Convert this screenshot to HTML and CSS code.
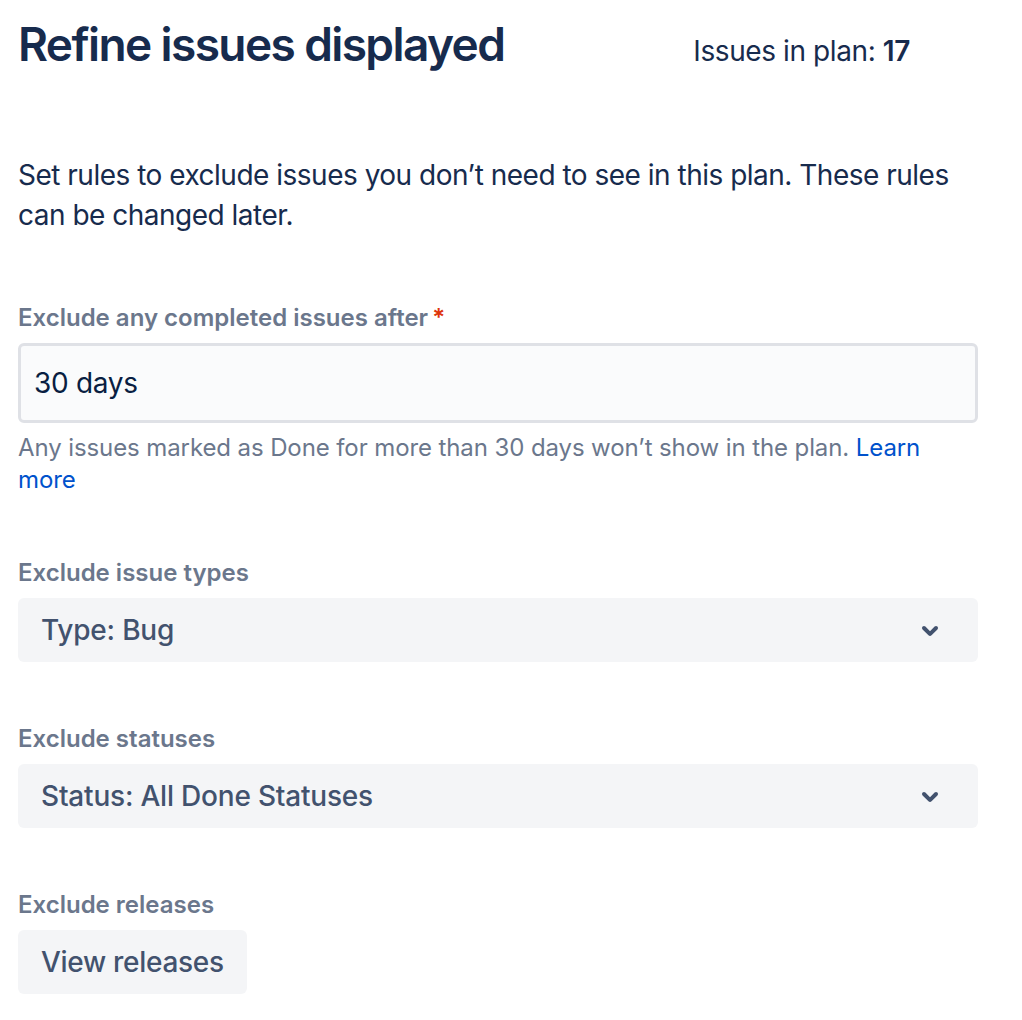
FILE: index.html
```html
<!DOCTYPE html>
<html lang="en">
<head>
<meta charset="utf-8">
<title>Refine issues displayed</title>
<link rel="stylesheet" href="styles.css">
</head>
<body>
<main class="page">
  <header class="header">
    <h1 class="title">Refine issues displayed</h1>
    <div class="count">Issues in plan: <strong>17</strong></div>
  </header>
  <p class="intro">Set rules to exclude issues you don’t need to see in this plan. These rules can be changed later.</p>

  <section class="field field-first">
    <div class="label">Exclude any completed issues after<span class="req">*</span></div>
    <div class="textfield">30 days</div>
    <div class="helper">Any issues marked as Done for more than 30 days won’t show in the plan. <a class="link" href="#">Learn more</a></div>
  </section>

  <section class="field">
    <div class="label">Exclude issue types</div>
    <div class="select">
      <span class="select-value">Type: Bug</span>
      <svg class="chevron" viewBox="0 0 24 24" width="48" height="48"><path fill="#42526E" d="M8.292 10.293a1.009 1.009 0 0 0 0 1.419l2.939 2.965c.218.215.5.322.779.322s.556-.107.769-.322l2.93-2.955a1.01 1.01 0 0 0 0-1.419.987.987 0 0 0-1.406 0l-2.298 2.317-2.307-2.327a.99.99 0 0 0-1.406 0z"/></svg>
    </div>
  </section>

  <section class="field">
    <div class="label">Exclude statuses</div>
    <div class="select">
      <span class="select-value">Status: All Done Statuses</span>
      <svg class="chevron" viewBox="0 0 24 24" width="48" height="48"><path fill="#42526E" d="M8.292 10.293a1.009 1.009 0 0 0 0 1.419l2.939 2.965c.218.215.5.322.779.322s.556-.107.769-.322l2.93-2.955a1.01 1.01 0 0 0 0-1.419.987.987 0 0 0-1.406 0l-2.298 2.317-2.307-2.327a.99.99 0 0 0-1.406 0z"/></svg>
    </div>
  </section>

  <section class="field">
    <div class="label">Exclude releases</div>
    <button class="button" type="button">View releases</button>
  </section>
</main>
</body>
</html>
```

FILE: styles.css
```css
html, body {
  margin: 0;
  padding: 0;
  background: #ffffff;
}

body {
  font-family: Inter, "Noto Sans", "Liberation Sans", sans-serif;
  color: #172B4D;
}

.page {
  width: 960px;
  padding: 16px 0 0 18px;
}

.header {
  display: flex;
  align-items: baseline;
  justify-content: space-between;
  padding-right: 68px;
}

.title {
  margin: 0;
  font-size: 46px;
  line-height: 56px;
  font-weight: 600;
  letter-spacing: -1.6px;
  color: #172B4D;
}

.count {
  font-size: 28px;
  line-height: 40px;
  letter-spacing: -0.4px;
  color: #172B4D;
}

.count strong {
  font-weight: 600;
}

.intro {
  margin: 83px 0 0;
  font-size: 28px;
  line-height: 40px;
  letter-spacing: -0.5px;
  color: #172B4D;
}

.field {
  margin-top: 61px;
}

.field-first {
  margin-top: 67px;
}

.label {
  font-size: 24px;
  line-height: 32px;
  font-weight: 600;
  color: #6B778C;
  margin-bottom: 9px;
}

.req {
  color: #DE350B;
  margin-left: 4px;
}

.textfield {
  box-sizing: border-box;
  height: 80px;
  border: 3px solid #DFE1E6;
  border-radius: 6px;
  background: #FAFBFC;
  padding: 0 13px;
  display: flex;
  align-items: center;
  font-size: 28px;
  letter-spacing: -0.3px;
  color: #091E42;
}

.helper {
  margin-top: 9px;
  font-size: 24px;
  line-height: 32px;
  letter-spacing: -0.1px;
  color: #6B778C;
}

.link {
  color: #0052CC;
  text-decoration: none;
}

.select {
  box-sizing: border-box;
  height: 64px;
  border-radius: 6px;
  background: #F4F5F7;
  display: flex;
  align-items: center;
  justify-content: space-between;
  padding: 0 24px 0 23px;
}

.select-value {
  font-size: 28px;
  font-weight: 500;
  letter-spacing: -0.2px;
  color: #42526E;
}

.chevron {
  display: block;
}

.button {
  height: 64px;
  border: 0;
  border-radius: 6px;
  background: #F4F5F7;
  padding: 0 23px;
  font-family: inherit;
  font-size: 28px;
  font-weight: 500;
  letter-spacing: -0.3px;
  color: #42526E;
  cursor: pointer;
}
```
